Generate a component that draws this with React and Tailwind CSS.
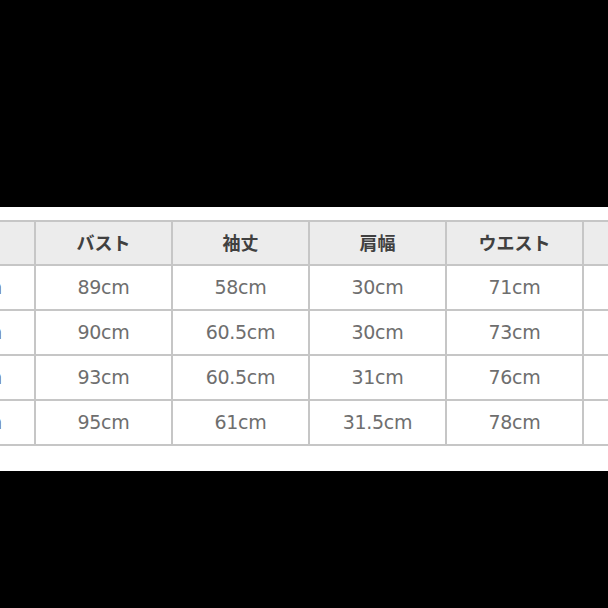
const headers = ["着丈", "バスト", "袖丈", "肩幅", "ウエスト", "ヒップ", ""];

const rows = [
  ["62cm", "89cm", "58cm", "30cm", "71cm", "90cm", ""],
  ["63cm", "90cm", "60.5cm", "30cm", "73cm", "92cm", ""],
  ["64cm", "93cm", "60.5cm", "31cm", "76cm", "95cm", ""],
  ["65cm", "95cm", "61cm", "31.5cm", "78cm", "98cm", ""],
];

export default function App() {
  return (
    <div className="w-[608px] h-[608px] bg-black pt-[207px] overflow-hidden">
      <div
        className="bg-white pt-[13px] pb-[25px] overflow-hidden"
        style={{ fontFamily: '"DejaVu Sans", "Noto Sans CJK JP", sans-serif' }}
      >
        <div className="ml-[-103px] w-max grid grid-cols-[repeat(7,135px)] gap-[2px] bg-[#c6c6c6] border-2 border-[#c6c6c6]">
          {headers.map((h, i) => (
            <div
              key={"h" + i}
              className="h-[42px] bg-[#ececec] flex items-center justify-center text-[18px] font-bold text-[#404040]"
            >
              {i === 0 || i === 5 ? "" : h}
            </div>
          ))}
          {rows.map((r, ri) =>
            r.map((c, ci) => (
              <div
                key={ri + "-" + ci}
                className={
                  ci === 0
                    ? "h-[43px] bg-white flex items-center justify-end pr-[32px] text-[19px] text-[#6e6e6e] tracking-[-0.3px]"
                    : "h-[43px] bg-white flex items-center justify-center text-[19px] text-[#6e6e6e] tracking-[-0.3px]"
                }
              >
                {ci === 5 ? "" : c}
              </div>
            ))
          )}
        </div>
      </div>
    </div>
  );
}
